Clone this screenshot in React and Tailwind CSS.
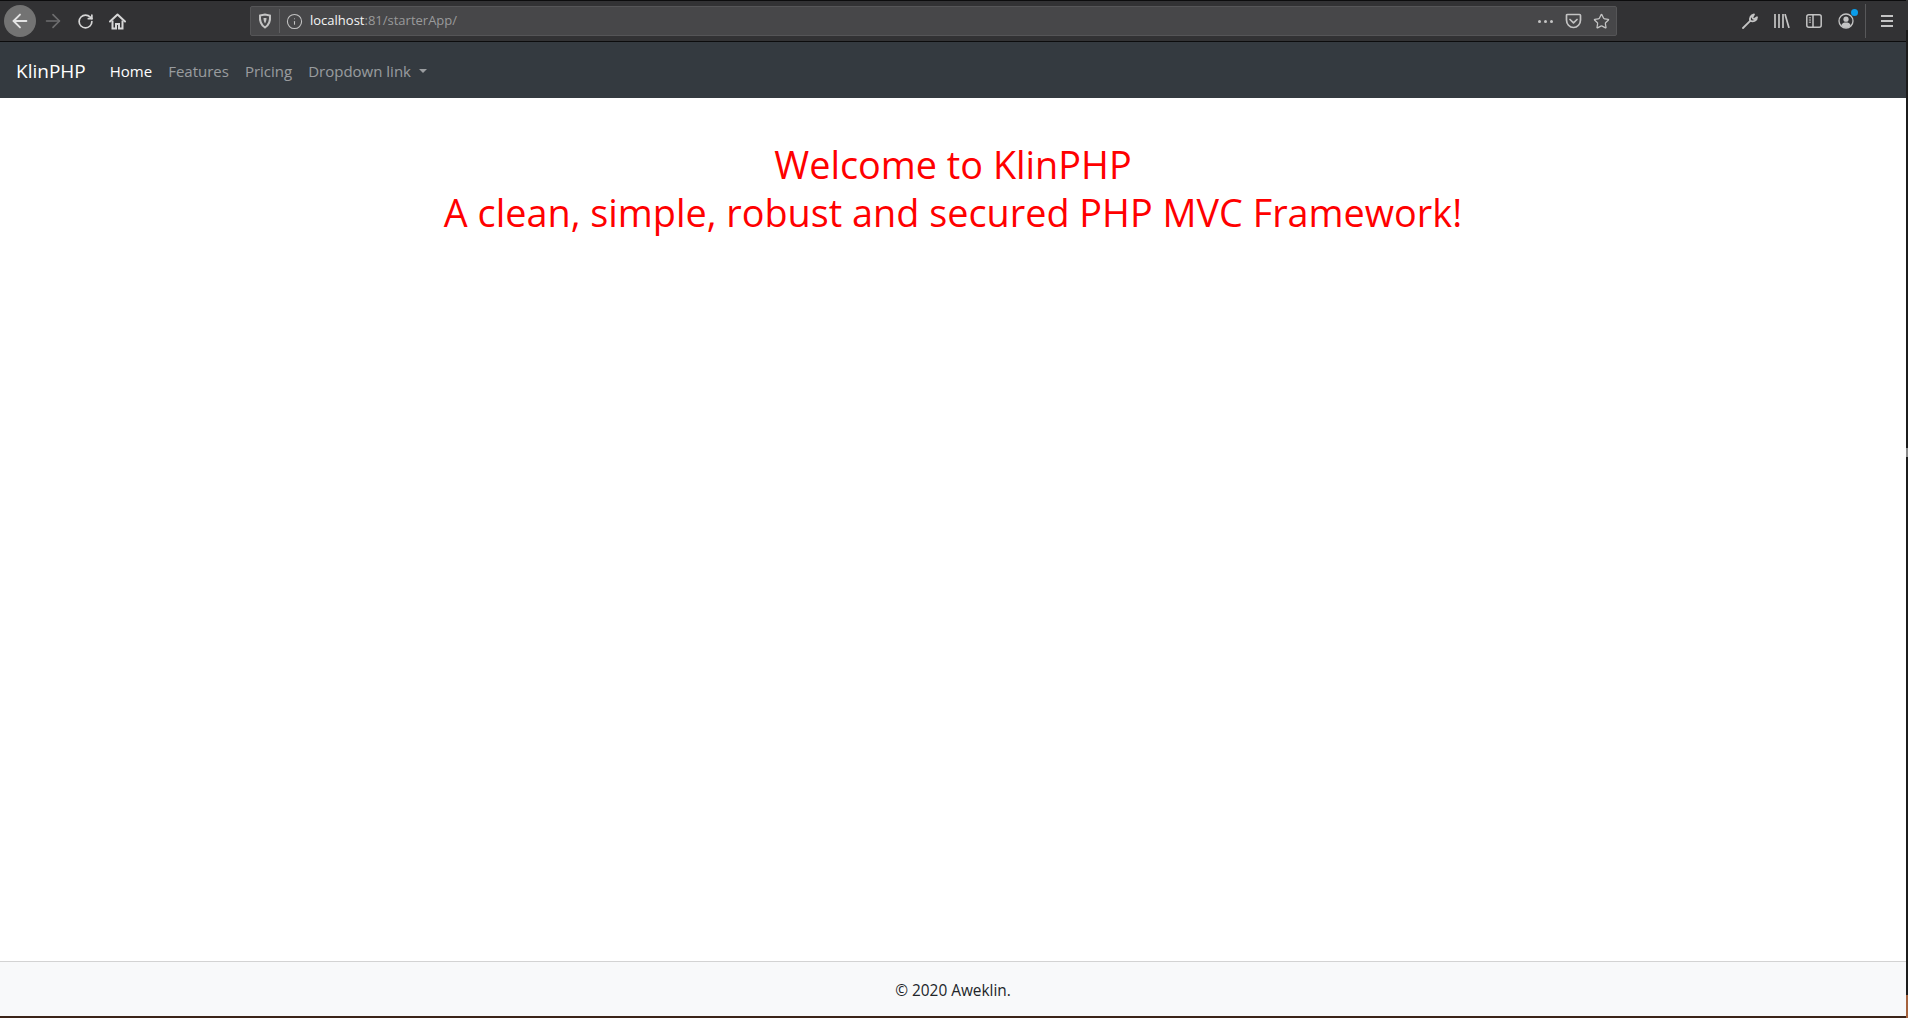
import React from "react";
import { ArrowLeft, ArrowRight, RotateCw, Star, Info } from "lucide-react";

const fontStack = "font-['Open_Sans','Noto_Sans',sans-serif]";

const HomeIcon = () => (
  <svg width="17" height="17" viewBox="0 0 17 17" fill="none" stroke="#d6d6d6" strokeWidth="2">
    <path d="M1 8.5 8.5 1.5 16 8.5" strokeLinejoin="round" strokeLinecap="round" />
    <path d="M3.5 7.5V15.5H7V11H10V15.5H13.5V7.5" />
  </svg>
);

const ShieldIcon = () => (
  <svg width="14" height="16" viewBox="0 0 14 16" fill="none" stroke="#c4c4c4" strokeWidth="2">
    <path d="M2 2.5 7 1.5 12 2.5C12.5 8 11 12 7 14.5 3 12 1.5 8 2 2.5Z" />
    <path d="M5.5 5H8.5C8.5 7 8 9 7 10.5 6 9 5.5 7 5.5 5Z" fill="#c4c4c4" stroke="none" />
  </svg>
);

const PocketIcon = () => (
  <svg width="17" height="16" viewBox="0 0 17 16" fill="none" stroke="#c4c4c4" strokeWidth="1.7">
    <path d="M1.5 2.5C1.5 1.8 2 1.5 2.5 1.5H14.5C15 1.5 15.5 1.8 15.5 2.5V7C15.5 11 12.5 14.5 8.5 14.5 4.5 14.5 1.5 11 1.5 7Z" />
    <path d="M5 6.5 8.5 9.8 12 6.5" strokeLinecap="round" strokeLinejoin="round" />
  </svg>
);

const WrenchIcon = () => (
  <svg width="16" height="16" viewBox="0 0 16 16" fill="none" stroke="#c4c4c4" strokeWidth="1.8">
    <path d="M1 15 8.2 7.8" strokeLinecap="round" />
    <path d="M8.2 7.8C7.4 5 8.8 2 12 1.4L10.4 4.4C10.6 5.4 11.2 6 12.2 6.1L15 4.2C15 7.5 11.5 9.3 8.2 7.8Z" strokeLinejoin="round" />
  </svg>
);

const LibraryIcon = () => (
  <svg width="16" height="14" viewBox="0 0 16 14" fill="none" stroke="#c4c4c4" strokeWidth="1.7">
    <path d="M1 0V14M5 0V14M9 0V14M11 0 15 14" />
  </svg>
);

const SidebarIcon = () => (
  <svg width="16" height="14" viewBox="0 0 16 14" fill="none" stroke="#c4c4c4" strokeWidth="1.5">
    <rect x="0.8" y="0.8" width="14.4" height="12.4" rx="2" />
    <path d="M7 1V13" />
    <path d="M2.8 3.8H5M2.8 6H5M2.8 8.2H5" strokeWidth="1" />
  </svg>
);

const AccountIcon = () => (
  <div className="relative h-[16px] w-[16px]">
    <svg width="16" height="16" viewBox="0 0 16 16" fill="none" stroke="#c4c4c4" strokeWidth="1.3">
      <circle cx="8" cy="8" r="7" />
      <circle cx="8" cy="6.2" r="2.6" fill="#c4c4c4" stroke="none" />
      <path d="M3.2 12.5C4 10 6 9.5 8 9.5 10 9.5 12 10 12.8 12.5 11.5 14 9.8 14.8 8 14.8 6.2 14.8 4.5 14 3.2 12.5Z" fill="#c4c4c4" stroke="none" />
    </svg>
    <span className="absolute right-[-4px] top-[-4px] h-[7px] w-[7px] rounded-full bg-[#0a9dea]" />
  </div>
);

const MenuIcon = () => (
  <svg width="12" height="12" viewBox="0 0 12 12" fill="#c4c4c4">
    <rect x="0" y="0" width="12" height="2" />
    <rect x="0" y="5" width="12" height="2" />
    <rect x="0" y="10" width="12" height="2" />
  </svg>
);

const Toolbar = () => (
  <div className="flex h-[42px] shrink-0 items-center border-t border-b border-t-[#0c0c0d] border-b-[#0c0c0d] bg-[#323234] pl-[4px]">
    <div className="flex h-[32px] w-[32px] items-center justify-center rounded-full bg-[#737373]">
      <ArrowLeft size={22} color="#e4e4e4" strokeWidth={2} />
    </div>
    <div className="ml-[6px] w-[22px]">
      <ArrowRight size={22} color="#6e6e6f" strokeWidth={1.8} />
    </div>
    <div className="ml-[13px] w-[17px]">
      <RotateCw size={17} color="#d6d6d6" strokeWidth={2.4} />
    </div>
    <div className="ml-[15px] w-[17px]">
      <HomeIcon />
    </div>
    <div className="ml-[124px] flex h-[30px] w-[1367px] items-center rounded-[2px] border border-[#555557] bg-[#474749] pl-[7px] pr-[6px]">
      <ShieldIcon />
      <div className="ml-[7px] h-[24px] w-px bg-[#5f5f61]" />
      <Info size={17} color="#c4c4c4" strokeWidth={1.5} className="ml-[6px]" />
      <div className={`ml-[7px] flex-1 text-[13px] ${fontStack}`}>
        <span className="text-[#f5f5f5]">localhost</span>
        <span className="text-[#9a9a9b]">:81/starterApp/</span>
      </div>
      <div className="flex items-center gap-[3px]">
        <span className="h-[3px] w-[3px] rounded-full bg-[#c4c4c4]" />
        <span className="h-[3px] w-[3px] rounded-full bg-[#c4c4c4]" />
        <span className="h-[3px] w-[3px] rounded-full bg-[#c4c4c4]" />
      </div>
      <div className="ml-[12px]">
        <PocketIcon />
      </div>
      <Star size={17} color="#c4c4c4" strokeWidth={1.8} className="ml-[11px]" />
    </div>
    <div className="ml-[125px]">
      <WrenchIcon />
    </div>
    <div className="ml-[16px]">
      <LibraryIcon />
    </div>
    <div className="ml-[16px]">
      <SidebarIcon />
    </div>
    <div className="ml-[16px]">
      <AccountIcon />
    </div>
    <div className="ml-[11px] h-[34px] w-px bg-[#58585a]" />
    <div className="ml-[15px]">
      <MenuIcon />
    </div>
  </div>
);

const App = () => {
  return (
    <div className={`flex h-[1018px] overflow-hidden bg-white ${fontStack}`}>
      <div className="flex min-w-0 flex-1 flex-col">
        <Toolbar />

        {/* Navbar */}
        <nav className="flex h-[56px] shrink-0 items-center bg-[#343a40] pl-[16px] pt-[2px]">
          <span className="text-[19px] text-white">KlinPHP</span>
          <div className="ml-[24px] flex items-center gap-[16px] text-[15px] text-[#ffffff80]">
            <span className="text-white">Home</span>
            <span>Features</span>
            <span>Pricing</span>
            <span className="flex items-center">
              Dropdown link
              <span className="ml-[8px] h-0 w-0 border-x-[4px] border-t-[4px] border-x-transparent border-t-[#ffffff80]" />
            </span>
          </div>
        </nav>

        {/* Heading */}
        <main className="flex-1 pt-[43px] text-center text-[37.8px] leading-[48px] text-[#ff0000]">
          <h1>
            Welcome to KlinPHP
            <br />
            A clean, simple, robust and secured PHP MVC Framework!
          </h1>
        </main>

        {/* Footer */}
        <footer className="flex h-[55px] shrink-0 items-center justify-center border-t border-[#d3d3d3] bg-[#f8f9fa] pt-[3px] text-[15.4px] text-[#212529]">
          © 2020 Aweklin.
        </footer>
        <div className="h-[2px] shrink-0 bg-[#3b2418]" />
      </div>

      {/* Window edge behind the browser */}
      <div className="flex w-[2px] shrink-0 flex-col bg-[#1c1c1c]">
        <div className="h-[30px] bg-[#323234]" />
        <div className="mt-[418px] h-[9px] bg-[#8a8a8a]" />
        <div className="mt-auto h-[23px] bg-[#a5623c]" />
      </div>
    </div>
  );
};

export default App;
